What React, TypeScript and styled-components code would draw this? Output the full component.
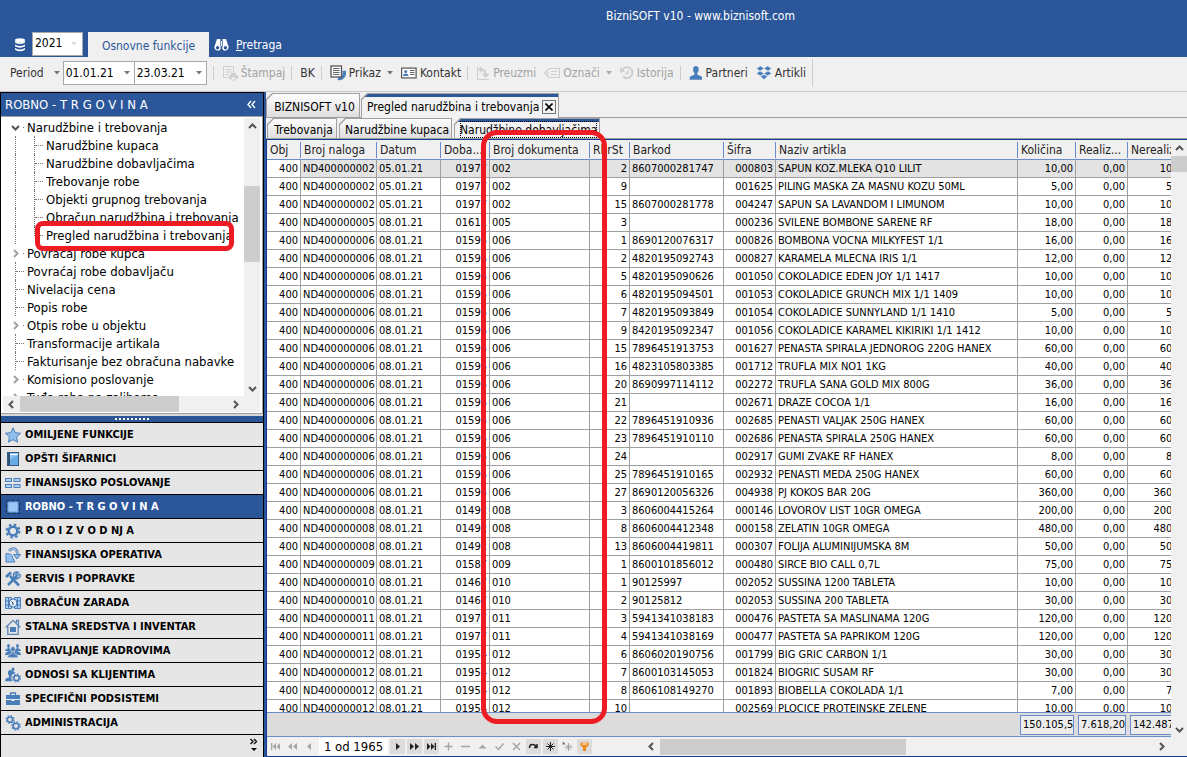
import React from "react";
import styled, { createGlobalStyle, css } from "styled-components";

const BLUE = "#2b579a";
const ICON = "#4a7ebb";

const Global = createGlobalStyle`
  * { box-sizing: border-box; }
  body { margin: 0; font-family: "DejaVu Sans Condensed", "DejaVu Sans", sans-serif; font-size: 12px; color: #000; background: #f0f0f0; }
  button, input, select { font: inherit; color: inherit; border: 0; padding: 0; margin: 0; background: none; border-radius: 0; }
  ul { list-style: none; margin: 0; padding: 0; }
  a { color: inherit; text-decoration: none; }
  svg { display: block; flex: none; }
`;

const Page = styled.div`
  position: relative;
  height: 100vh;
  display: flex;
  flex-direction: column;
  overflow: hidden;
  white-space: nowrap;
`;

/* ---------- title bar ---------- */
const Header = styled.header`
  height: 57px;
  flex: none;
  background: ${BLUE};
  color: #fff;
  display: flex;
  flex-direction: column;
  justify-content: space-between;
`;
const Title = styled.h1`
  margin: 0;
  height: 32px;
  padding-left: 214px;
  font-size: 12px;
  line-height: 32px;
  font-weight: normal;
  text-align: center;
`;
const Ribbon = styled.nav`
  height: 25px;
  display: flex;
  align-items: center;
  padding-left: 14px;
`;
const YearBox = styled.label`
  display: flex;
  align-items: center;
  width: 51px;
  height: 24px;
  margin: 0 5px 1px 6px;
  padding: 0 5px 0 2px;
  background: #fff;
  border: 1px solid #a8a8a8;
  color: #000;
`;
const YearSelect = styled.select`
  flex: 1;
  min-width: 0;
  height: 22px;
  padding-bottom: 2px;
  appearance: none;
  font-size: 12px;
`;
const RibbonTab = styled.button`
  height: 25px;
  width: 121px;
  padding-top: 3px;
  background: #f0f0f0;
  color: ${BLUE};
  font-size: 12px;
`;
const SearchLink = styled.a`
  display: flex;
  align-items: center;
  gap: 7px;
  padding: 1px 0 0 5px;
  font-size: 12px;
`;

/* ---------- toolbar ---------- */
const Toolbar = styled.div`
  height: 35px;
  flex: none;
  display: flex;
  align-items: center;
  padding: 0 0 3px 10px;
  border-bottom: 1px solid #c8c8c8;
`;
const ToolButton = styled.button<{ $off?: boolean; $first?: boolean }>`
  display: flex;
  align-items: center;
  gap: 3px;
  height: 24px;
  margin-left: ${(p) => (p.$first ? 0 : 8)}px;
  font-size: 12px;
  color: ${(p) => (p.$off ? "#a2a2a2" : "#333")};
`;
const Separator = styled.span<{ $tall?: boolean }>`
  width: 1px;
  height: ${(p) => (p.$tall ? 28 : 14)}px;
  margin-left: 6px;
  background: #cdcdcd;
`;
const DateBox = styled.label`
  display: flex;
  align-items: center;
  width: 72px;
  height: 24px;
  padding: 0 4px 0 2px;
  background: #fff;
  border: 1px solid #a8a8a8;
  & + & { margin-left: -1px; width: 73px; }
`;
const DateInput = styled.input`
  flex: 1;
  min-width: 0;
  height: 22px;
  font-size: 12px;
  color: #000;
`;
const Spacer = styled.span<{ $w: number }>`
  width: ${(p) => p.$w}px;
  flex: none;
`;

/* ---------- side panel ---------- */
const Main = styled.div`
  flex: 1;
  min-height: 0;
  display: flex;
`;
const Side = styled.aside`
  width: 264px;
  flex: none;
  display: flex;
  flex-direction: column;
  background: #e6e6e6;
  border: 1px solid #000;
  border-bottom: 0;
`;
const SideHead = styled.h2`
  margin: 0;
  height: 23px;
  flex: none;
  display: flex;
  align-items: center;
  justify-content: space-between;
  padding: 0 7px 0 4px;
  background: ${BLUE};
  color: #fff;
  font-size: 13px;
  font-weight: normal;
`;
const TreeBox = styled.div`
  flex: 1;
  min-height: 0;
  display: flex;
  flex-direction: column;
  background: #fff;
  border: 1px solid #a0a0a0;
  border-width: 1px 1px 1px 0;
  padding: 1px 2px;
`;
const TreeTop = styled.div`
  flex: 1;
  min-height: 0;
  display: flex;
`;
const Tree = styled.ul`
  flex: 1;
  min-width: 0;
  overflow: hidden;
  color: #000;
`;
const TreeRow = styled.li`
  display: flex;
  align-items: center;
  height: 18px;
  font-size: 13px;
`;
const Guide = styled.span<{ $end?: boolean; $wide?: boolean }>`
  align-self: flex-start;
  width: 19px;
  height: ${(p) => (p.$end ? 10 : 18)}px;
  margin-left: ${(p) => (p.$wide ? 12 : 0)}px;
  border-left: 1px dotted #777;
`;
const Branch = styled.span<{ $open?: boolean }>`
  width: ${(p) => (p.$open ? 1 : 8)}px;
  height: 0;
  margin: 0 3px 0 ${(p) => (p.$open ? -3 : -18)}px;
  border-top: 1px dotted #777;
  flex: none;
`;
const Twist = styled.button`
  width: 15px;
  height: 18px;
  margin-left: 8px;
  display: flex;
  align-items: center;
`;
const Splitter = styled.div`
  height: 8px;
  flex: none;
  border-top: 2px solid #d8d8d8;
  background: ${BLUE};
  display: flex;
  justify-content: center;
  align-items: center;
  gap: 2px;
`;
const Dot = styled.i`
  width: 2px;
  height: 2px;
  background: #fff;
`;
const GroupButton = styled.button<{ $on?: boolean }>`
  display: flex;
  align-items: center;
  gap: 4px;
  width: 100%;
  height: 24px;
  flex: none;
  padding-left: 4px;
  border-top: 1px solid #000;
  background: ${(p) => (p.$on ? BLUE : "#e6e6e6")};
  color: ${(p) => (p.$on ? "#fff" : "#000")};
  font-size: 11px;
  font-weight: bold;
`;
const SideFoot = styled.div`
  height: 23px;
  flex: none;
  border-top: 1px solid #000;
  display: flex;
  justify-content: flex-end;
  padding: 3px 5px;
`;

/* ---------- scroll bars ---------- */
const VScroll = styled.div`
  width: 16px;
  flex: none;
  display: flex;
  flex-direction: column;
  background: #f0f0f0;
`;
const HScroll = styled.div<{ $fixed?: boolean }>`
  height: 16px;
  flex: ${(p) => (p.$fixed ? "none" : "1 0 auto")};
  display: flex;
  background: #f0f0f0;
`;
const ScrollButton = styled.button`
  width: 17px;
  height: 16px;
  flex: none;
  display: flex;
  align-items: center;
  justify-content: center;
`;
const Track = styled.span<{ $grow: number }>`
  flex: ${(p) => p.$grow} 0 0;
`;
const Thumb = styled.span<{ $grow: number }>`
  flex: ${(p) => p.$grow} 0 0;
  background: #cdcdcd;
`;

/* ---------- work area ---------- */
const Work = styled.main`
  flex: 1;
  min-width: 0;
  display: flex;
  flex-direction: column;
  border-left: 2px solid ${BLUE};
`;
const Tabs = styled.div<{ $small?: boolean }>`
  height: ${(p) => (p.$small ? 21 : 26)}px;
  flex: none;
  display: flex;
  align-items: flex-end;
  gap: ${(p) => (p.$small ? 2 : 1)}px;
  padding-left: ${(p) => (p.$small ? 1 : 0)}px;
  border-bottom: 1px solid #a0a0a0;
`;
const Tab = styled.div<{ $on?: boolean; $small?: boolean }>`
  position: relative;
  isolation: isolate;
  display: flex;
  align-items: center;
  justify-content: center;
  gap: 3px;
  height: ${(p) => (p.$small ? 20 : 24)}px;
  min-width: ${(p) => (p.$small ? 70 : 94)}px;
  padding: 3px 3px 0 6px;
  background: #a0a0a0;
  clip-path: polygon(6px 0, 100% 0, 100% 100%, 0 100%, 0 6px);
  &::before {
    content: "";
    position: absolute;
    z-index: -1;
    inset: 1px 1px 0 1px;
    clip-path: polygon(6px 0, 100% 0, 100% 100%, 0 100%, 0 6px);
    background: linear-gradient(#fdfdfd, #dedede);
  }
  ${(p) =>
    p.$on &&
    css`
      height: ${p.$small ? 20 : 25}px;
      margin-bottom: ${p.$small ? 0 : -1}px;
      &::before { background: linear-gradient(${BLUE} 3px, #f2f2f2 3px); }
    `}
`;
const TabLabel = styled.button<{ $focus?: boolean }>`
  height: 17px;
  font-size: 12px;
  outline: ${(p) => (p.$focus ? "1px dotted #000" : "none")};
  outline-offset: -1px;
`;
const CloseButton = styled.button`
  width: 14px;
  height: 14px;
  display: flex;
  align-items: center;
  justify-content: center;
  border: 1px solid #777;
`;
const GridFrame = styled.section`
  flex: 1;
  min-height: 0;
  display: flex;
  flex-direction: column;
  border: 1px solid #103c96;
  border-width: 1px 0 1px 1px;
  background: #f0f0f0;
`;
const GridTop = styled.div`
  flex: 1;
  min-height: 0;
  display: flex;
`;
const GridPane = styled.div`
  flex: 1;
  min-width: 0;
  display: flex;
  flex-direction: column;
`;
const Clip = styled.div`
  flex: 1;
  min-height: 0;
  overflow: hidden;
  background: #fff;
`;
const Table = styled.table`
  width: 924px;
  table-layout: fixed;
  border-collapse: separate;
  border-spacing: 0;
`;
const Th = styled.th`
  height: 20px;
  padding: 0 0 0 3px;
  overflow: hidden;
  text-align: left;
  font-size: 12px;
  line-height: 16px;
  font-weight: normal;
  color: #222;
  border-bottom: 1px solid #6a8ccc;
  background: linear-gradient(#f0f0f0, #f0f0f0) left / calc(100% - 1px) 100% no-repeat,
    linear-gradient(#f0f0f0 2px, #6a8ccc 2px 18px, #f0f0f0 18px);
`;
const Td = styled.td<{ $num?: boolean; $shade?: boolean }>`
  height: 18px;
  padding: 0 2px 0 2px;
  overflow: hidden;
  font-size: 11px;
  line-height: 16px;
  text-align: ${(p) => (p.$num ? "right" : "left")};
  background: ${(p) => (p.$shade ? "#e3e3e3" : "#fff")};
  border-right: 1px solid #a0a0a0;
  border-bottom: 1px solid #a0a0a0;
`;
const Totals = styled.div`
  height: 25px;
  flex: none;
  display: flex;
  align-items: center;
  gap: 4px;
  overflow: hidden;
  padding-left: 753px;
  background: #dcdcdc;
  border-top: 1px solid #6a8ccc;
  border-bottom: 1px solid #6a8ccc;
`;
const Total = styled.output<{ $w: number }>`
  width: ${(p) => p.$w}px;
  height: 20px;
  flex: none;
  overflow: hidden;
  padding-left: 2px;
  line-height: 18px;
  font-size: 11px;
  background: #ececec;
  border: 1px solid #6a8ccc;
`;
const Navigator = styled.div`
  height: 19px;
  flex: none;
  display: flex;
  align-items: center;
  gap: 2px;
  padding: 0 17px 0 1px;
`;
const NavButton = styled.button<{ $on?: boolean }>`
  width: 15px;
  height: 15px;
  flex: none;
  display: flex;
  align-items: center;
  justify-content: center;
  background: ${(p) => (p.$on ? "#dcdcdc" : "#f0f0f0")};
  color: ${(p) => (p.$on ? "#222" : "#a6a6a6")};
`;
const Position = styled.span`
  width: 69px;
  height: 17px;
  flex: none;
  text-align: center;
  font-size: 13px;
  line-height: 17px;
  background: #fff;
`;
const Corner = styled.span`
  width: 47px;
  flex: none;
`;

/* ---------- red markers over the content ---------- */
const Marker = styled.div<{ $x: number; $y: number; $w: number; $h: number; $r: number }>`
  position: absolute;
  left: ${(p) => p.$x}px;
  top: ${(p) => p.$y}px;
  width: ${(p) => p.$w}px;
  height: ${(p) => p.$h}px;
  border: 5px solid #ed1c24;
  border-radius: ${(p) => p.$r}px;
  pointer-events: none;
`;

/* ---------- icons ---------- */
const Caret = ({ c = "#777" }: { c?: string }) => (
  <svg width="6" height="4" viewBox="0 0 6 4"><path d="M0 0h6L3 3.5z" fill={c} /></svg>
);
const Chevron = ({ d, c = "#555" }: { d: "up" | "down" | "left" | "right"; c?: string }) => {
  const p = { up: "M1 6l3.5-3.5L8 6", down: "M1 3l3.5 3.5L8 3", left: "M6 1L2.5 4.5L6 8", right: "M3 1l3.5 3.5L3 8" }[d];
  return <svg width="9" height="9" viewBox="0 0 9 9" fill="none" stroke={c} strokeWidth="2"><path d={p} /></svg>;
};
const I = ({ children, w = 16 }: { children: React.ReactNode; w?: number }) => (
  <svg width={w} height="16" viewBox={`0 0 ${w} 16`}>{children}</svg>
);
const Gear = ({ x, y, r, c = ICON }: { x: number; y: number; r: number; c?: string }) => (
  <g fill="none" stroke={c}>
    <circle cx={x} cy={y} r={r * 0.58} strokeWidth={r * 0.34} />
    <circle cx={x} cy={y} r={r * 0.86} strokeWidth={r * 0.28} strokeDasharray={`${r * 0.338} ${r * 0.338}`} />
  </g>
);
const Person = ({ x, y, s, c = ICON }: { x: number; y: number; s: number; c?: string }) => (
  <g transform={`translate(${x} ${y}) scale(${s})`} fill={c}>
    <ellipse cx="6" cy="3.6" rx="2.9" ry="3.6" />
    <path d="M4.5 6h3v3l4 1.500q.9.5.9 3.5H-.4q0-3 .9-3.5l4-1.500z" />
  </g>
);

const light = "#a9d0f5";
const groupIcons: Record<string, React.ReactNode> = {
  star: <I><path d="M8 .8l2.2 4.900 5.300.6-3.900 3.600 1 5.300L8 12.600l-4.600 2.600 1-5.300L.5 6.300l5.300-.6z" fill="#8fbfee" stroke="#4f7fb5" /></I>,
  book: <I><rect x="2.500" y="1.500" width="11" height="13" fill="#8fc3f2" stroke="#36597f" /><path d="M3 2h2v12H3z" fill="#2f4f74" /><path d="M5 3.500h8" stroke="#fff" /><path d="M5 14V9q4-4 8-5v10z" fill="#6aabe6" /></I>,
  blocks: <I><g fill={light} stroke="#4f7fb5"><rect x=".5" y="3.500" width="6" height="3" /><rect x="9" y="3.500" width="6" height="3" /><rect x=".5" y="9.500" width="6" height="3" /><rect x="9" y="9.500" width="6" height="3" /></g></I>,
  square: <I><rect x="1.500" y="1.500" width="13" height="13" fill="none" stroke="#1c2f4d" strokeDasharray="3 2" /><rect x="3" y="3" width="10" height="10" fill="#9cc6f5" stroke="#6fa2e2" /></I>,
  gear: <I><Gear x={8} y={8} r={7.5} /></I>,
  cycle: <I><path d="M1 15V6.500q6.500 0 6.500 4L10 15z" fill="#8fbfee" stroke="#4f7fb5" /><path d="M4 4q2.500-3.500 6-2 3 1.800 2.200 6.500" fill="none" stroke="#4f7fb5" strokeWidth="2.600" /><path d="M4 4q2.500-3.500 6-2 3 1.800 2.200 6.500" fill="none" stroke="#c9e2fa" /><path d="M8.500 7.500h7l-3.500 4.500z" fill="#8fbfee" stroke="#4f7fb5" /></I>,
  tools: <I><g fill="none" stroke={ICON}><path d="M3 14l9-9" strokeWidth="2.600" /><path d="M14.500 2.500L12 5l-1.500-1.500L13 1.200A3.400 3.400 0 1 0 15 3.300" strokeWidth="1.400" /><path d="M5 5l9 9.500" strokeWidth="2.600" /><path d="M1 6l5-4.500" strokeWidth="3" /></g></I>,
  money: <I><path d="M.5 2.500h6v11h-6zM9.500 2.500h6v11h-6z" fill={light} stroke="#4f7fb5" /><path d="M0 6h6M0 10h6M10 6h6M10 10h6M3.500 3v10M12.500 3v10" stroke="#4f7fb5" /><circle cx="8" cy="8" r="4" fill="#e8f2fc" stroke="#3d6da8" strokeWidth="1.200" /><path d="M6.500 6.500L8 8v2" fill="none" stroke="#1c2f4d" /></I>,
  house: <I><path d="M.7 8.500L8 1.300l7.300 7.200M11.500 4V1.500h2V6M2.800 7v8.300h10.400V7" fill="none" stroke="#5c87b5" strokeWidth="1.300" /><path d="M5 8h6v5H5z" fill={ICON} /></I>,
  people: <I><Person x={0.5} y={1} s={0.5} /><Person x={9.5} y={1} s={0.5} /><path d="M0 12q0-3 4-4h8q4 1 4 4z" fill={ICON} /><g stroke="#e6e6e6" strokeWidth=".8"><Person x={3.1} y={3.5} s={0.8} /></g></I>,
  clients: <I><Person x={5} y={0.5} s={0.5} /><Person x={0.5} y={3} s={0.8} /><circle cx="11.500" cy="11" r="5.200" fill="#e6e6e6" /><Gear x={11.5} y={11} r={4.5} /></I>,
  case: <I><path d="M1 4h14v4H1zM1 9h5.500v1h3V9H15v5H1z" fill={ICON} /><path d="M5.500 4V2h5v2" fill="none" stroke={ICON} strokeWidth="1.300" /></I>,
  gears: <I><Gear x={5} y={4.5} r={4.5} /><Gear x={11} y={11} r={4.8} /></I>,
};

const pale = "#cfcfcf";
const DatabaseIcon = () => (
  <I w={12}><g fill="#fff"><path d="M1 4q5 2.400 10 0v1.500q-5 3-10 0zM1 7.500q5 3 10 0v1.800q-5 2.900-10 0zM1 11q5 3 10 0v1.700q-5 3.300-10 0z" /><ellipse cx="6" cy="3.200" rx="5" ry="1.900" /></g></I>
);
const Binoculars = () => (
  <I w={15}><path d="M3 2h3.500v2h2V2H12l2.500 7.500a3.400 3.400 0 0 1-6.200 2.500V9H6.700v3A3.400 3.400 0 0 1 .5 9.500z" fill="#fff" /><path d="M6.500 4v5M8.500 4v5" stroke={BLUE} strokeWidth=".7" /><circle cx="3.600" cy="10.700" r="1.700" fill={BLUE} /><circle cx="11.400" cy="10.700" r="1.700" fill={BLUE} /></I>
);
const PrintIcon = () => (
  <I><path d="M1.500 1.500h10v7M1.500 1.500v11H6M3.500 4.500h6M3.500 7h6M3.500 9.500h3" fill="none" stroke={pale} /><path d="M7 10h9v4H7zM9 8h5v2H9zM9 13h5v2.500H9z" fill={pale} /><path d="M9.500 12.500h4v2h-4z" fill="#f0f0f0" /></I>
);
const ViewIcon = () => (
  <I><path d="M15.500 5.500a7 7 0 0 1-8 9.500l1-3.500 4-1.500V6z" fill={ICON} /><rect x="1" y="1" width="10.500" height="11" fill="#fff" stroke="#555" strokeWidth="1.300" /><path d="M3 3.500h6.500M3 5.500h6.500M3 7.500h6.500M3 9.500h6.500" stroke="#666" /></I>
);
const CardIcon = () => (
  <I><rect x=".6" y="3.100" width="14.500" height="9.800" fill="#fff" stroke="#555" strokeWidth="1.200" /><circle cx="4.700" cy="6.500" r="1.500" fill={ICON} /><path d="M2 11q0-2.500 2.700-2.500T7.500 11z" fill={ICON} /><path d="M9 5.500h4.500M9 7.500h4.500M9 9.500h4.500" stroke="#666" /></I>
);
const PullIcon = () => (
  <I w={14}><path d="M1.500 2v12.500H13" fill="none" stroke={pale} /><path d="M5 4.500q4.500 0 4.500 5" fill="none" stroke={pale} strokeWidth="2" /><path d="M2 4.500L6 1v7zM6 8.500h7.500L9.700 13z" fill={pale} /></I>
);
const TagIcon = () => (
  <I><path d="M5 3.500h10.500v9H5L.7 8z" fill="none" stroke={pale} strokeWidth="1.200" /><circle cx="4" cy="8" r="1" fill={pale} /><path d="M7 6.500h6M7 9.500h6" stroke={pale} /></I>
);
const HistoryIcon = () => (
  <I w={14}><path d="M2.500 4.500A5.500 5.500 0 1 1 3 11.500" fill="none" stroke={pale} strokeWidth="2" /><path d="M0 2l5 4.500L0 8z" fill={pale} /><path d="M8 5v3.500H5" fill="none" stroke={pale} strokeWidth="1.400" /></I>
);
const DropIcon = () => (
  <I><path d="M4.500 1L8 3.500 4 6 .5 3.500zM11.500 1L8 3.500 12 6l3.500-2.500zM4 6l4 2.500-3.500 2.300L.5 8.500zM12 6L8 8.500l3.500 2.300 4-2.300zM4.500 11.600L8 9.400l3.500 2.200L8 14.500z" fill={ICON} stroke="#f0f0f0" strokeWidth=".4" /></I>
);

/* ---------- data ---------- */
type Node = { t: string; sub?: boolean; open?: boolean; twist?: boolean; last?: boolean };
const tree: Node[] = [
  { t: "Narudžbine i trebovanja", twist: true, open: true },
  { t: "Narudžbine kupaca", sub: true },
  { t: "Narudžbine dobavljačima", sub: true },
  { t: "Trebovanje robe", sub: true },
  { t: "Objekti grupnog trebovanja", sub: true },
  { t: "Obračun narudžbina i trebovanja", sub: true },
  { t: "Pregled narudžbina i trebovanja", sub: true, last: true },
  { t: "Povraćaj robe kupca", twist: true },
  { t: "Povraćaj robe dobavljaču" },
  { t: "Nivelacija cena" },
  { t: "Popis robe" },
  { t: "Otpis robe u objektu", twist: true },
  { t: "Transformacije artikala" },
  { t: "Fakturisanje bez obračuna nabavke" },
  { t: "Komisiono poslovanje", twist: true },
  { t: "Tuđa roba na zalihama", twist: true },
];
const groups: [string, string][] = [
  ["OMILJENE FUNKCIJE", "star"],
  ["OPŠTI ŠIFARNICI", "book"],
  ["FINANSIJSKO POSLOVANJE", "blocks"],
  ["ROBNO - T R G O V I N A", "square"],
  ["P R O I Z V O D NJ A", "gear"],
  ["FINANSIJSKA OPERATIVA", "cycle"],
  ["SERVIS I POPRAVKE", "tools"],
  ["OBRAČUN ZARADA", "money"],
  ["STALNA SREDSTVA I INVENTAR", "house"],
  ["UPRAVLJANJE KADROVIMA", "people"],
  ["ODNOSI SA KLIJENTIMA", "clients"],
  ["SPECIFIČNI PODSISTEMI", "case"],
  ["ADMINISTRACIJA", "gears"],
];
const columns: [string, number][] = [
  ["Obj", 34], ["Broj naloga", 76], ["Datum", 64], ["Doba...", 49], ["Broj dokumenta", 100], ["RbrSt", 40],
  ["Barkod", 94], ["Šifra", 52], ["Naziv artikla", 242], ["Količina", 58], ["Realiz...", 52], ["Nerealiz...", 63],
];
const numeric = [0, 1, 3, 5, 7, 9, 10, 11];
/* order, supplier, line, barcode, code, name, quantity */
const lines = `002|01977|2|8607000281747|000803|SAPUN KOZ.MLEKA Q10 LILIT|10
002|01977|9||001625|PILING MASKA ZA MASNU KOZU 50ML|5
002|01977|15|8607000281778|004247|SAPUN SA LAVANDOM I LIMUNOM|10
005|01611|3||000236|SVILENE BOMBONE SARENE RF|18
006|01595|1|8690120076317|000826|BOMBONA VOCNA MILKYFEST 1/1|16
006|01595|2|4820195092743|000827|KARAMELA MLECNA IRIS 1/1|12
006|01595|5|4820195090626|001050|COKOLADICE EDEN JOY 1/1 1417|10
006|01595|6|4820195094501|001053|COKOLADICE GRUNCH MIX 1/1 1409|10
006|01595|7|4820195093849|001054|COKOLADICE SUNNYLAND 1/1 1410|5
006|01595|9|8420195092347|001056|COKOLADICE KARAMEL KIKIRIKI 1/1 1412|10
006|01595|15|7896451913753|001627|PENASTA SPIRALA JEDNOROG 220G HANEX|60
006|01595|16|4823105803385|001712|TRUFLA MIX NO1 1KG|40
006|01595|20|8690997114112|002272|TRUFLA SANA GOLD MIX 800G|36
006|01595|21||002671|DRAZE COCOA 1/1|16
006|01595|22|7896451910936|002685|PENASTI VALJAK 250G HANEX|60
006|01595|23|7896451910110|002686|PENASTA SPIRALA 250G HANEX|60
006|01595|24||002917|GUMI ZVAKE RF HANEX|8
006|01595|25|7896451910165|002932|PENASTI MEDA 250G HANEX|60
006|01595|27|8690120056326|004938|PJ KOKOS BAR 20G|360
008|01492|3|8606004415264|000146|LOVOROV LIST 10GR OMEGA|200
008|01492|8|8606004412348|000158|ZELATIN 10GR OMEGA|480
008|01492|13|8606004419811|000307|FOLIJA ALUMINIJUMSKA 8M|50
009|01587|1|8600101856012|000480|SIRCE BIO CALL 0,7L|75
010|01467|1|90125997|002052|SUSSINA 1200 TABLETA|10
010|01467|2|90125812|002053|SUSSINA 200 TABLETA|30
011|01977|3|5941341038183|000476|PASTETA SA MASLINAMA 120G|120
011|01977|4|5941341038169|000477|PASTETA SA PAPRIKOM 120G|120
012|01954|6|8606020190756|001799|BIG GRIC CARBON 1/1|30
012|01954|7|8600103145053|001824|BIOGRIC SUSAM RF|30
012|01954|8|8606108149270|001893|BIOBELLA COKOLADA 1/1|7
012|01954|10||002569|PLOCICE PROTEINSKE ZELENE|10`;
const rows = lines.split("\n").map((l) => {
  const [doc, sup, no, bar, code, name, qty] = l.split("|");
  const day = doc === "002" ? "05.01.21" : "08.01.21";
  return ["400", "ND400000" + doc, day, sup, doc, no, bar, code, name, qty + ",00", "0,00", qty + ",00"];
});

const nav = (d: string, fill = true) => (
  <svg width="11" height="11" viewBox="0 0 11 11" fill={fill ? "currentColor" : "none"} stroke={fill ? "none" : "currentColor"} strokeWidth="1.5"><path d={d} /></svg>
);
const navBefore: [string, string][] = [
  ["Prvi", "M1 2h1.300v7H1zM6 2v7L2.500 5.500zM10 2v7L6.500 5.500z"],
  ["Strana nazad", "M5 2v7L1 5.500zM10 2v7L6 5.500z"],
  ["Prethodni", "M7 2v7L3 5.500z"],
];
const navAfter: [string, string][] = [
  ["Sledeći", "M4 2v7l4-3.500z"],
  ["Strana napred", "M1 2v7l4-3.500zM6 2v7l4-3.500z"],
  ["Poslednji", "M1 2v7l3.500-3.500zM5 2v7l3.500-3.500zM8.700 2H10v7H8.700z"],
];
const navEdit: [string, string][] = [
  ["Dodaj", "M5.500 1.500v8M1.500 5.500h8"],
  ["Obriši", "M1 5.500h9"],
  ["Izmeni", "M1.500 7.500l4-4 4 4z"],
  ["Potvrdi", "M1.500 5.500l3 3 5-6"],
  ["Otkaži", "M2 2l7 7M9 2L2 9"],
];

export default function App() {
  return (
    <>
      <Global />
      <Page>
        <Header>
          <Title>BizniSOFT v10 - www.biznisoft.com</Title>
          <Ribbon>
            <DatabaseIcon />
            <YearBox>
              <YearSelect aria-label="Godina"><option>2021</option></YearSelect>
              <Caret c="#ddd" />
            </YearBox>
            <RibbonTab>Osnovne funkcije</RibbonTab>
            <SearchLink href="#pretraga"><Binoculars /><span><u>P</u>retraga</span></SearchLink>
          </Ribbon>
        </Header>

        <Toolbar>
          <ToolButton $first>Period<Spacer $w={4} /><Caret /></ToolButton>
          <Spacer $w={3} />
          <DateBox><DateInput aria-label="Datum od" defaultValue="01.01.21" /><Caret /></DateBox>
          <DateBox><DateInput aria-label="Datum do" defaultValue="23.03.21" /><Caret /></DateBox>
          <Separator />
          <ToolButton $off><PrintIcon />Štampaj</ToolButton>
          <Separator />
          <ToolButton>BK</ToolButton>
          <Separator />
          <ToolButton><ViewIcon />Prikaz<Spacer $w={0} /><Caret /></ToolButton>
          <ToolButton><CardIcon />Kontakt</ToolButton>
          <Separator />
          <ToolButton $off><PullIcon />Preuzmi</ToolButton>
          <ToolButton $off><TagIcon />Označi<Spacer $w={0} /><Caret c="#aaa" /></ToolButton>
          <ToolButton $off><HistoryIcon />Istorija</ToolButton>
          <Separator />
          <ToolButton><I w={14}><Person x={1} y={1} s={0.98} /></I>Partneri</ToolButton>
          <ToolButton><DropIcon />Artikli</ToolButton>
          <Separator $tall />
        </Toolbar>

        <Main>
          <Side>
            <SideHead>
              ROBNO - T R G O V I N A
              <svg width="9" height="9" viewBox="0 0 9 9" fill="none" stroke="#fff" strokeWidth="1.400"><path d="M4 1L1 4.500 4 8M8 1L5 4.500 8 8" /></svg>
            </SideHead>
            <TreeBox>
              <TreeTop>
                <Tree>
                  {tree.map((n) => (
                    <TreeRow key={n.t}>
                      {n.twist ? (
                        <>
                          <Twist aria-label={n.t}><Chevron d={n.open ? "down" : "right"} c={n.open ? "#555" : "#a0a0a0"} /></Twist>
                          <Branch $open />
                          <span>{n.t}</span>
                        </>
                      ) : (
                        <>
                          <Guide $wide />
                          {n.sub && <Guide $end={n.last} />}
                          <Branch />
                          <a href="#stavka">{n.t}</a>
                        </>
                      )}
                    </TreeRow>
                  ))}
                </Tree>
                <VScroll>
                  <ScrollButton aria-label="Gore"><Chevron d="up" /></ScrollButton>
                  <Track $grow={52} /><Thumb $grow={76} /><Track $grow={118} />
                  <ScrollButton aria-label="Dole"><Chevron d="down" /></ScrollButton>
                </VScroll>
              </TreeTop>
              <HScroll $fixed>
                <ScrollButton aria-label="Levo"><Chevron d="left" /></ScrollButton>
                <Thumb $grow={159} /><Track $grow={48} />
                <ScrollButton aria-label="Desno"><Chevron d="right" /></ScrollButton>
                <Spacer $w={16} />
              </HScroll>
            </TreeBox>
            <Splitter>{Array.from({ length: 9 }, (_, i) => <Dot key={i} />)}</Splitter>
            {groups.map(([t, icon]) => (
              <GroupButton key={t} $on={icon === "square"}>{groupIcons[icon]}{t}</GroupButton>
            ))}
            <SideFoot>
              <svg width="9" height="15" viewBox="0 0 9 15"><path d="M1.500 1l2.500 2.500L1.500 6M5 1l2.500 2.500L5 6" fill="none" stroke="#000" strokeWidth="1.300" /><path d="M2 10h6l-3 3z" /></svg>
            </SideFoot>
          </Side>

          <Work>
            <Tabs>
              <Tab><TabLabel>BIZNISOFT v10</TabLabel></Tab>
              <Tab $on>
                <TabLabel>Pregled narudžbina i trebovanja</TabLabel>
                <CloseButton aria-label="Zatvori">
                  <svg width="8" height="8" viewBox="0 0 8 8" stroke="#000" strokeWidth="1.600"><path d="M.5.5l7 7M7.500.5l-7 7" /></svg>
                </CloseButton>
              </Tab>
            </Tabs>
            <Tabs $small>
              <Tab $small><TabLabel>Trebovanja</TabLabel></Tab>
              <Tab $small><TabLabel>Narudžbine kupaca</TabLabel></Tab>
              <Tab $small $on><TabLabel $focus>Narudžbine dobavljačima</TabLabel></Tab>
            </Tabs>
            <GridFrame>
              <GridTop>
                <GridPane>
                  <Clip>
                    <Table>
                      <colgroup>{columns.map(([t, w]) => <col key={t} width={w} />)}</colgroup>
                      <thead><tr>{columns.map(([t]) => <Th key={t}>{t}</Th>)}</tr></thead>
                      <tbody>
                        {rows.map((r, i) => (
                          <tr key={i}>
                            {r.map((v, j) => <Td key={j} $num={numeric.includes(j)} $shade={i === 0 && j > 0}>{v}</Td>)}
                          </tr>
                        ))}
                      </tbody>
                    </Table>
                  </Clip>
                  <Totals>
                    <Total $w={54}>150.105,50</Total>
                    <Total $w={48}>7.618,20</Total>
                    <Total $w={60}>142.487,30</Total>
                  </Totals>
                </GridPane>
                <VScroll>
                  <ScrollButton aria-label="Red gore"><Chevron d="up" /></ScrollButton>
                  <Thumb $grow={16} /><Track $grow={540} />
                  <ScrollButton aria-label="Red dole"><Chevron d="down" /></ScrollButton>
                </VScroll>
              </GridTop>
              <Navigator>
                {navBefore.map(([l, d]) => <NavButton key={l} aria-label={l}>{nav(d)}</NavButton>)}
                <Position>1 od 1965</Position>
                {navAfter.map(([l, d]) => <NavButton key={l} aria-label={l} $on>{nav(d)}</NavButton>)}
                {navEdit.map(([l, d]) => <NavButton key={l} aria-label={l}>{nav(d, l === "Izmeni")}</NavButton>)}
                <NavButton $on aria-label="Osveži">{nav("M1.500 7q0-4 3.500-3.500 2.500 0 3.500 3.500M6 6.500h3V3", false)}</NavButton>
                <NavButton $on aria-label="Zabeleži">
                  <svg width="11" height="11" viewBox="0 0 11 11" stroke="currentColor"><path d="M5.500 1v9M1 5.500h9M2.500 2.500l6 6M8.500 2.500l-6 6" /></svg>
                </NavButton>
                <NavButton aria-label="Vrati">
                  <svg width="11" height="11" viewBox="0 0 11 11" stroke="currentColor"><path d="M1 1v3l2-1.500zM6.500 2v8M2.500 6h8M4 3.500l5 5M9 3.500l-5 5" /></svg>
                </NavButton>
                <NavButton $on aria-label="Filter">
                  <svg width="11" height="11" viewBox="0 0 11 11"><path d="M1.500 1.500h8v3l-2.500 2v3.500H4V6.500l-2.500-2z" fill="#ef8a1d" /><path d="M3 3h5" stroke="#fff" /></svg>
                </NavButton>
                <Corner />
                <HScroll>
                  <ScrollButton aria-label="Kolone levo"><Chevron d="left" /></ScrollButton>
                  <Thumb $grow={246} /><Track $grow={248} />
                  <ScrollButton aria-label="Kolone desno"><Chevron d="right" /></ScrollButton>
                </HScroll>
              </Navigator>
            </GridFrame>
          </Work>
        </Main>

        <Marker $x={35} $y={221} $w={199} $h={30} $r={8} />
        <Marker $x={481} $y={130} $w={126} $h={594} $r={16} />
      </Page>
    </>
  );
}
